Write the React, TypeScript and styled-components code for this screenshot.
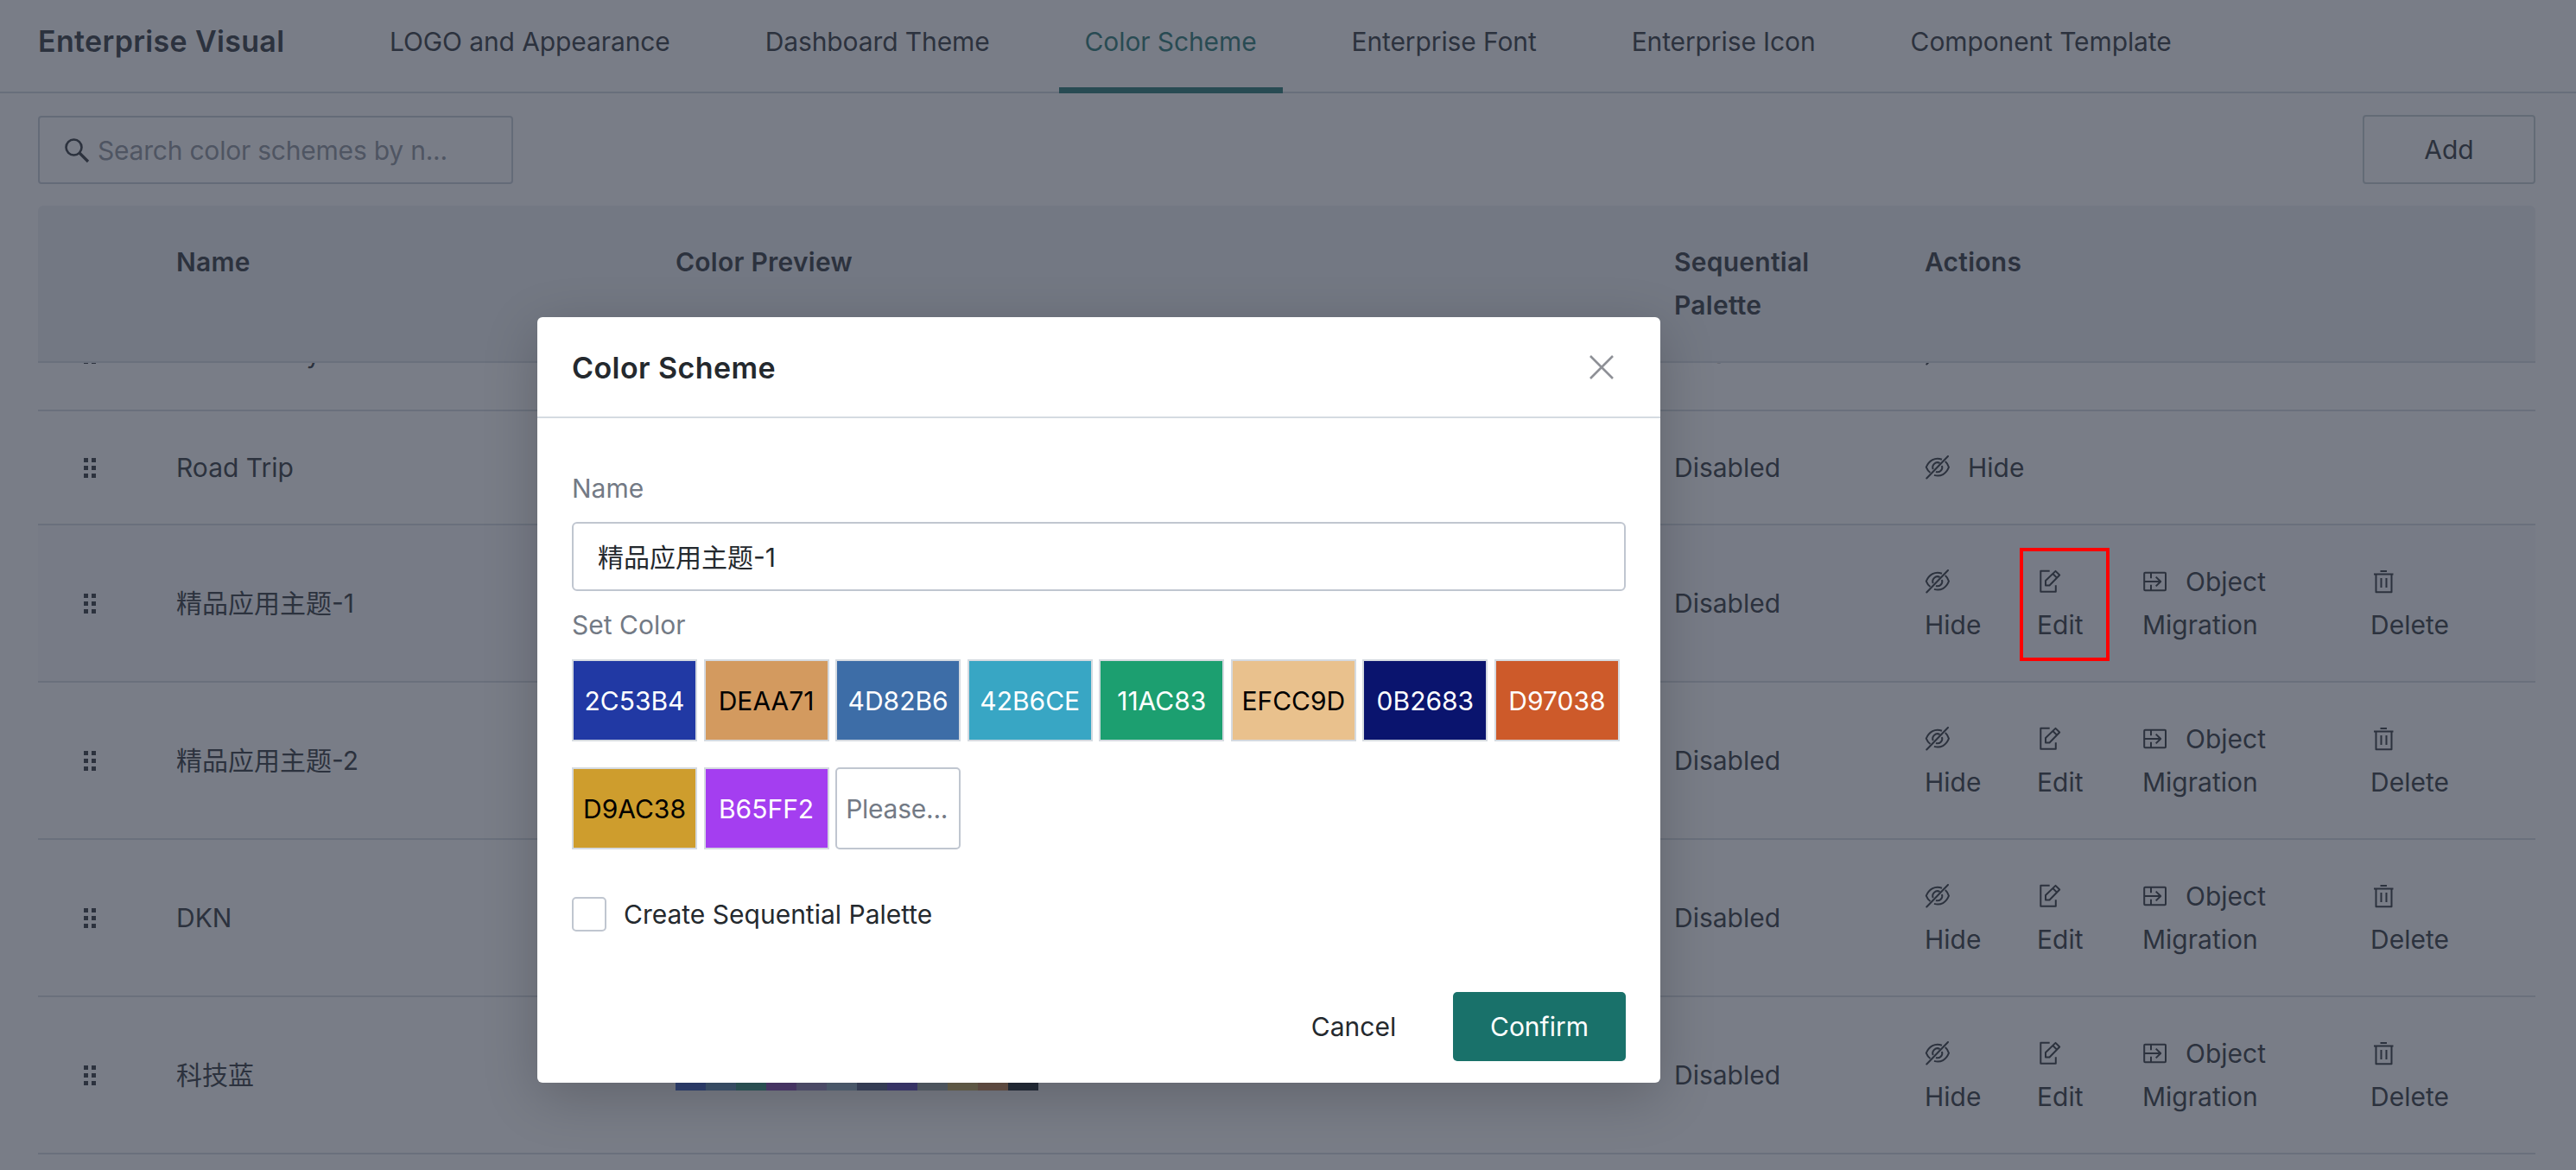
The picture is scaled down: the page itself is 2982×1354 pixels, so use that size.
import React from "react";
import styled, { createGlobalStyle, css } from "styled-components";

const Global = createGlobalStyle`
  * { box-sizing: border-box; }
  body {
    margin: 0;
    background: #fff;
    overflow: hidden;
    font-family: Inter, "Noto Sans CJK SC", sans-serif;
    font-size: 30px;
    line-height: 50px;
    color: #24292e;
  }
  button, input { font: inherit; color: inherit; letter-spacing: inherit; }
`;

const Page = styled.div`
  position: relative;
  width: 2982px;
  height: 1354px;
  overflow: hidden;
`;

const TopBar = styled.header`
  display: flex;
  align-items: stretch;
  height: 108px;
  padding: 0 44px;
  border-bottom: 2px solid #cfd8dc;
`;

const PageTitle = styled.h1`
  width: 377px;
  margin: 0;
  padding-top: 23px;
  font-size: 34px;
  font-weight: 600;
  letter-spacing: 0.33px;
`;

const Tabs = styled.nav`
  display: flex;
  gap: 50px;
`;

const Tab = styled.a<{ $active?: boolean }>`
  height: 108px;
  padding: 23px 30px 0;
  letter-spacing: -0.11px;
  white-space: nowrap;
  ${(p) =>
    p.$active &&
    css`
      color: #19716a;
      border-bottom: 7px solid #19716a;
    `}
`;

const Toolbar = styled.div`
  display: flex;
  justify-content: space-between;
  align-items: flex-end;
  height: 105px;
  margin: 0 47px 25px 44px;
`;

const SearchBox = styled.label`
  display: flex;
  align-items: center;
  width: 550px;
  height: 79px;
  padding-left: 28px;
  gap: 9px;
  border: 2px solid #c4ccd4;
  border-radius: 4px;
  color: #24292e;
`;

const Hint = styled.span`
  color: #868c96;
  letter-spacing: -0.22px;
`;

const Outlined = styled.button`
  width: 200px;
  height: 80px;
  border: 2px solid #bfcccf;
  border-radius: 4px;
  background: none;
`;

const Table = styled.section`
  margin: 0 47px 0 44px;
`;

const columns = css`
  display: grid;
  grid-template-columns: 160px 578px 1156px 290px 1fr;
`;

const HeadRow = styled.div`
  ${columns}
  height: 182px;
  padding-top: 40px;
  background: #eef0f4;
  border-bottom: 2px solid #d5d9df;
  border-radius: 6px 6px 0 0;
  font-weight: 600;
  letter-spacing: 0.25px;
`;

const HeadCell = styled.div`
  padding-right: 60px;
`;

const Body = styled.div`
  height: 934px;
  overflow: hidden;
`;

const Rows = styled.div`
  margin-top: -76px;
`;

const Row = styled.div<{ $hover?: boolean; $tall?: boolean }>`
  ${columns}
  align-items: center;
  height: ${(p) => (p.$tall ? 182 : 132)}px;
  border-bottom: 2px solid #d5d9df;
  background: ${(p) => (p.$hover ? "#f9fafb" : "none")};
`;

const Handle = styled.div`
  display: grid;
  grid-template-columns: 5px 5px;
  gap: 4px;
  padding-left: 53px;
`;

const Dot = styled.i`
  width: 5px;
  height: 5px;
  background: #24292e;
`;

const Strip = styled.div`
  display: flex;
  height: 36px;
`;

const StripCell = styled.i<{ $c: string }>`
  width: 35px;
  background: ${(p) => p.$c};
`;

const Actions = styled.div`
  display: grid;
  grid-template-columns: 130px 122px 264px auto;
`;

const Action = styled.div<{ $w?: number }>`
  width: ${(p) => (p.$w ? p.$w + "px" : "auto")};
  svg {
    margin-right: 20px;
    vertical-align: -3px;
  }
`;

const Mask = styled.div`
  position: absolute;
  inset: 0;
  background: rgba(49, 55, 71, 0.65);
`;

const Callout = styled.div`
  position: absolute;
  left: 2338px;
  top: 634px;
  width: 104px;
  height: 131px;
  border: 4px solid #f00;
`;

const Modal = styled.div`
  position: absolute;
  left: 622px;
  top: 367px;
  width: 1300px;
  height: 886px;
  display: flex;
  flex-direction: column;
  border-radius: 6px;
  background: #fff;
  box-shadow: 0 16px 64px rgba(0, 0, 0, 0.2);
`;

const ModalHead = styled.div`
  display: flex;
  align-items: center;
  justify-content: space-between;
  height: 117px;
  padding: 0 53px 0 40px;
  border-bottom: 2px solid #d5dbe1;
`;

const ModalTitle = styled.h2`
  margin: 0;
  padding-top: 2px;
  font-size: 34px;
  font-weight: 600;
  letter-spacing: 0.42px;
`;

const ModalBody = styled.div`
  display: flex;
  flex-direction: column;
  flex: 1;
  padding: 56px 40px 0;
`;

const Label = styled.div`
  color: #737a85;
`;

const Field = styled.input`
  width: 1220px;
  height: 80px;
  margin: 14px 0;
  padding: 0 28px 2px;
  border: 2px solid #c0c6d0;
  border-radius: 6px;
  background: #fff;
`;

const Swatches = styled.div`
  display: flex;
  flex-wrap: wrap;
  gap: 30px 7.57px;
  padding-top: 15px;
`;

const Swatch = styled.div<{ $c: string; $dark?: boolean }>`
  display: flex;
  align-items: center;
  justify-content: center;
  width: 145px;
  height: 95px;
  border: 2px solid #d5dae0;
  background: ${(p) => p.$c};
  color: ${(p) => (p.$dark ? "#000" : "#fff")};
`;

const EmptySwatch = styled.div`
  display: flex;
  align-items: center;
  width: 145px;
  height: 95px;
  padding-left: 10px;
  border: 2px solid #c0c6d0;
  border-radius: 5px;
  color: #737a85;
  letter-spacing: -0.25px;
`;

const CheckRow = styled.label`
  display: flex;
  align-items: center;
  gap: 20px;
  margin-top: 50px;
`;

const CheckBox = styled.span`
  width: 40px;
  height: 40px;
  border: 2px solid #c0c6d0;
  border-radius: 5px;
`;

const ModalFoot = styled.div`
  display: flex;
  justify-content: flex-end;
  gap: 20px;
  padding: 0 40px 25px;
`;

const TextButton = styled.button`
  width: 190px;
  height: 80px;
  border: 0;
  background: none;
`;

const Primary = styled.button`
  width: 200px;
  height: 80px;
  border: 0;
  border-radius: 5px;
  background: #19716a;
  color: #fff;
`;

const line = {
  fill: "none",
  stroke: "currentColor",
  strokeWidth: 2,
  strokeLinejoin: "round",
} as const;

const SearchIcon = () => (
  <svg width="30" height="30" viewBox="0 0 30 30" {...line} strokeWidth={2.6}>
    <circle cx="11.5" cy="11.5" r="9" />
    <path d="M18 18l10 10" strokeWidth="3.2" />
  </svg>
);

const HideIcon = () => (
  <svg width="30" height="28" viewBox="0 0 30 28" {...line}>
    <path d="M20 4.800C12 1.800 5 6 1.800 13.700c1 2.600 2.500 4.800 4.700 6.300" />
    <path d="M23.800 7c2.100 1.700 3.500 4 4.200 6.700C25 21.300 18.500 25.300 11 22.900" />
    <path d="M17.600 9a5.500 5.500 0 0 0-7.800 7M20 12a5.500 5.500 0 0 1-7 7" />
    <path d="M27 1L2.300 26.500" strokeLinecap="round" />
  </svg>
);

const EditIcon = () => (
  <svg width="30" height="28" viewBox="0 0 30 28" {...line}>
    <path d="M14.700 1.800H4.300v24h17.500v-7.500" />
    <path d="M10 18.500v-5.500L21.500 1.900l4.700 4.600L14.500 18.500zM18.400 5l4.600 4.600" />
  </svg>
);

const MigrateIcon = () => (
  <svg width="30" height="26" viewBox="0 0 30 26" {...line}>
    <rect x="2.200" y="1.800" width="24.800" height="20.500" rx="1" />
    <path d="M10 1.800v6.500M10 15.800v6.500M2.200 12h19M15.700 6.600l5.500 5.400-5.500 5.400" />
  </svg>
);

const TrashIcon = () => (
  <svg width="30" height="28" viewBox="0 0 30 28" {...line}>
    <path d="M11.500 2h7.500M4 5.500h22.500M6.500 5.500V26.300h18V5.500M12.500 10v11M18.500 10v11" />
  </svg>
);

const CloseIcon = () => (
  <svg width="30" height="30" viewBox="0 0 30 30" fill="none" stroke="#8e9096" strokeWidth="2.6">
    <path d="M2 2l26 26M28 2L2 28" />
  </svg>
);

const tabs = [
  "LOGO and Appearance",
  "Dashboard Theme",
  "Color Scheme",
  "Enterprise Font",
  "Enterprise Icon",
  "Component Template",
];

const palette = [
  "#3057c8", "#5b8fc0", "#2f9c86", "#8a45c0", "#9c8ccb", "#94b8d4",
  "#506090", "#5a42c8", "#a2b0b0", "#d8b860", "#d0884c", "#101c24",
];

const rows = [
  { name: "Modern Lily" },
  { name: "Road Trip" },
  { name: "精品应用主题-1", tall: true, hover: true },
  { name: "精品应用主题-2", tall: true },
  { name: "DKN", tall: true },
  { name: "科技蓝", tall: true },
];

const swatches = [
  { code: "2C53B4", c: "#2139a4" },
  { code: "DEAA71", c: "#d39a5f", dark: true },
  { code: "4D82B6", c: "#3d6da7" },
  { code: "42B6CE", c: "#38a6c4" },
  { code: "11AC83", c: "#1c9f70" },
  { code: "EFCC9D", c: "#e9c18d", dark: true },
  { code: "0B2683", c: "#0a146e" },
  { code: "D97038", c: "#cd5a2a" },
  { code: "D9AC38", c: "#ce9d2d", dark: true },
  { code: "B65FF2", c: "#a43ef0" },
];

const DragHandle = () => (
  <Handle>
    {Array.from({ length: 6 }, (_, i) => (
      <Dot key={i} />
    ))}
  </Handle>
);

export default function App() {
  return (
    <Page>
      <Global />
      <TopBar>
        <PageTitle>Enterprise Visual</PageTitle>
        <Tabs>
          {tabs.map((t) => (
            <Tab key={t} $active={t === "Color Scheme"}>{t}</Tab>
          ))}
        </Tabs>
      </TopBar>
      <Toolbar>
        <SearchBox>
          <SearchIcon />
          <Hint>Search color schemes by n...</Hint>
        </SearchBox>
        <Outlined>Add</Outlined>
      </Toolbar>
      <Table>
        <HeadRow>
          <HeadCell />
          <HeadCell>Name</HeadCell>
          <HeadCell>Color Preview</HeadCell>
          <HeadCell>Sequential Palette</HeadCell>
          <HeadCell>Actions</HeadCell>
        </HeadRow>
        <Body>
          <Rows>
            {rows.map((r) => (
              <Row key={r.name} $tall={r.tall} $hover={r.hover}>
                <DragHandle />
                <div>{r.name}</div>
                <Strip>
                  {palette.map((c) => (
                    <StripCell key={c} $c={c} />
                  ))}
                </Strip>
                <div>Disabled</div>
                {r.tall ? (
                  <Actions>
                    <Action $w={70}><HideIcon />Hide</Action>
                    <Action $w={62}><EditIcon />Edit</Action>
                    <Action $w={204}><MigrateIcon />Object Migration</Action>
                    <Action $w={100}><TrashIcon />Delete</Action>
                  </Actions>
                ) : (
                  <Action><HideIcon />Hide</Action>
                )}
              </Row>
            ))}
          </Rows>
        </Body>
      </Table>
      <Mask />
      <Callout />
      <Modal>
        <ModalHead>
          <ModalTitle>Color Scheme</ModalTitle>
          <CloseIcon />
        </ModalHead>
        <ModalBody>
          <Label>Name</Label>
          <Field defaultValue="精品应用主题-1" />
          <Label>Set Color</Label>
          <Swatches>
            {swatches.map((s) => (
              <Swatch key={s.code} $c={s.c} $dark={s.dark}>{s.code}</Swatch>
            ))}
            <EmptySwatch>Please...</EmptySwatch>
          </Swatches>
          <CheckRow>
            <CheckBox />
            Create Sequential Palette
          </CheckRow>
        </ModalBody>
        <ModalFoot>
          <TextButton>Cancel</TextButton>
          <Primary>Confirm</Primary>
        </ModalFoot>
      </Modal>
    </Page>
  );
}
